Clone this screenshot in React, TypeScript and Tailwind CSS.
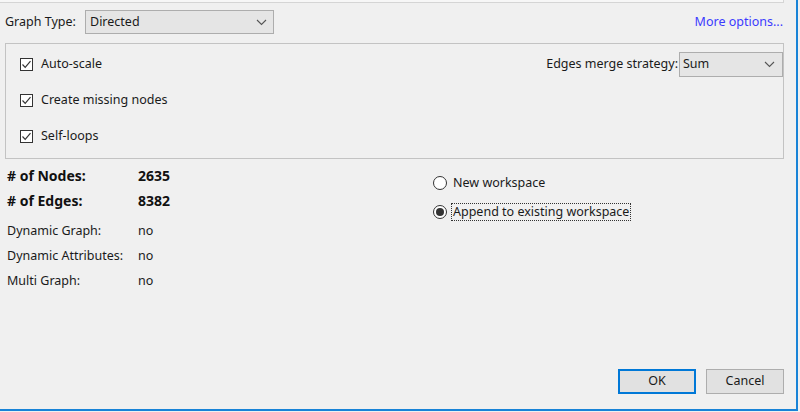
import React from "react";

function Chevron() {
  return (
    <svg width="11" height="7" viewBox="0 0 11 7" className="shrink-0">
      <path d="M1 1 L5.5 5.5 L10 1" fill="none" stroke="#555" strokeWidth="1.1" />
    </svg>
  );
}

function Check({ label }: { label: string }) {
  return (
    <div className="flex items-center h-[16px]">
      <div className="w-[13px] h-[13px] border border-[#333] bg-white flex items-center justify-center">
        <svg width="11" height="11" viewBox="0 0 11 11">
          <path d="M1.5 5.5 L4.2 8.3 L9.5 2.2" fill="none" stroke="#333" strokeWidth="1.2" />
        </svg>
      </div>
      <span className="ml-[8px]">{label}</span>
    </div>
  );
}

function Radio({ label, checked, focus }: { label: string; checked?: boolean; focus?: boolean }) {
  return (
    <div className="flex items-center h-[18px]">
      <div className="w-[14px] h-[14px] rounded-full border border-[#333] bg-white flex items-center justify-center">
        {checked && <div className="w-[8px] h-[8px] rounded-full bg-[#333]" />}
      </div>
      <span
        className={
          "ml-[4px] px-[1px] leading-[16px] " +
          (focus ? "border border-dotted border-[#333]" : "border border-transparent")
        }
      >
        {label}
      </span>
    </div>
  );
}

export default function App() {
  return (
    <div
      className="w-[800px] h-[412px] bg-[#f0f0f0] text-[12.5px] text-[#1a1a1a] overflow-hidden"
      style={{ fontFamily: '"Noto Sans", "Open Sans", sans-serif' }}
    >
      <div className="w-[798px] h-[411px] border-r-2 border-b-2 border-[#1883d7] flex flex-col">
        {/* top panel edge */}
        <div className="w-[784px] h-[3px] bg-[#f7f7f7] border-b border-r border-[#d5d5d5]" />

        {/* graph type row */}
        <div className="flex items-center mt-[7px] pl-[5px] pr-[13px] h-[24px]">
          <span className="w-[80px]">Graph Type:</span>
          <div className="w-[189px] h-[24px] bg-[#e5e5e5] border border-[#adadad] flex items-center justify-between pl-[4px] pr-[6px]">
            <span>Directed</span>
            <Chevron />
          </div>
          <span className="ml-auto text-[#3b3bff]">More options...</span>
        </div>

        {/* group box */}
        <div className="mt-[9px] ml-[5px] w-[779px] h-[116px] border border-[#c3c3c3] flex">
          <div className="flex flex-col gap-[20px] pl-[14px] pt-[12px]">
            <Check label="Auto-scale" />
            <Check label="Create missing nodes" />
            <Check label="Self-loops" />
          </div>
          <div className="ml-auto flex items-start pt-[8px]">
            <div className="flex items-center h-[25px]">
              <span className="mr-[1px]">Edges merge strategy:</span>
              <div className="w-[104px] h-[25px] bg-[#e5e5e5] border border-[#adadad] flex items-center justify-between pl-[3px] pr-[7px]">
                <span>Sum</span>
                <Chevron />
              </div>
            </div>
          </div>
        </div>

        {/* stats + radios */}
        <div className="flex mt-[4px]">
          <div className="pl-[7px] w-[433px]">
            <div className="grid grid-cols-[131px_auto] font-bold text-[14px] leading-[25px] text-[#111]">
              <span>#&nbsp;of Nodes:</span>
              <span>2635</span>
              <span>#&nbsp;of Edges:</span>
              <span>8382</span>
            </div>
            <div className="grid grid-cols-[131px_auto] leading-[25px] mt-[5px]">
              <span>Dynamic Graph:</span>
              <span>no</span>
              <span>Dynamic Attributes:</span>
              <span>no</span>
              <span>Multi Graph:</span>
              <span>no</span>
            </div>
          </div>
          <div className="flex flex-col gap-[11px] pt-[11px]">
            <Radio label="New workspace" />
            <Radio label="Append to existing workspace" checked focus />
          </div>
        </div>

        {/* buttons */}
        <div className="mt-auto mb-[15px] flex justify-end gap-[10px] pr-[12px]">
          <button className="w-[78px] h-[25px] bg-[#e1e1e1] border-2 border-[#0078d7] flex items-center justify-center">
            OK
          </button>
          <button className="w-[78px] h-[25px] bg-[#e1e1e1] border border-[#adadad] flex items-center justify-center">
            Cancel
          </button>
        </div>
      </div>
    </div>
  );
}
